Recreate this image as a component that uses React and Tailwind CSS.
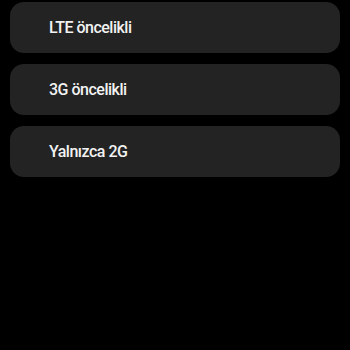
export default function App() {
  const options = ['LTE öncelikli', '3G öncelikli', 'Yalnızca 2G'];

  return (
    <div className="w-[350px] h-[350px] bg-black pt-[2px] px-[10px] flex flex-col gap-[11px]" style={{ fontFamily: 'Roboto, "Noto Sans", sans-serif' }}>
      {options.map((label) => (
        <div key={label} className="h-[51px] w-[330px] rounded-[14px] bg-[#232323] flex items-center pl-[39px]">
          <span className="text-[16px] font-medium tracking-[-0.5px] text-[#f2f2f2]">{label}</span>
        </div>
      ))}
    </div>
  );
}
